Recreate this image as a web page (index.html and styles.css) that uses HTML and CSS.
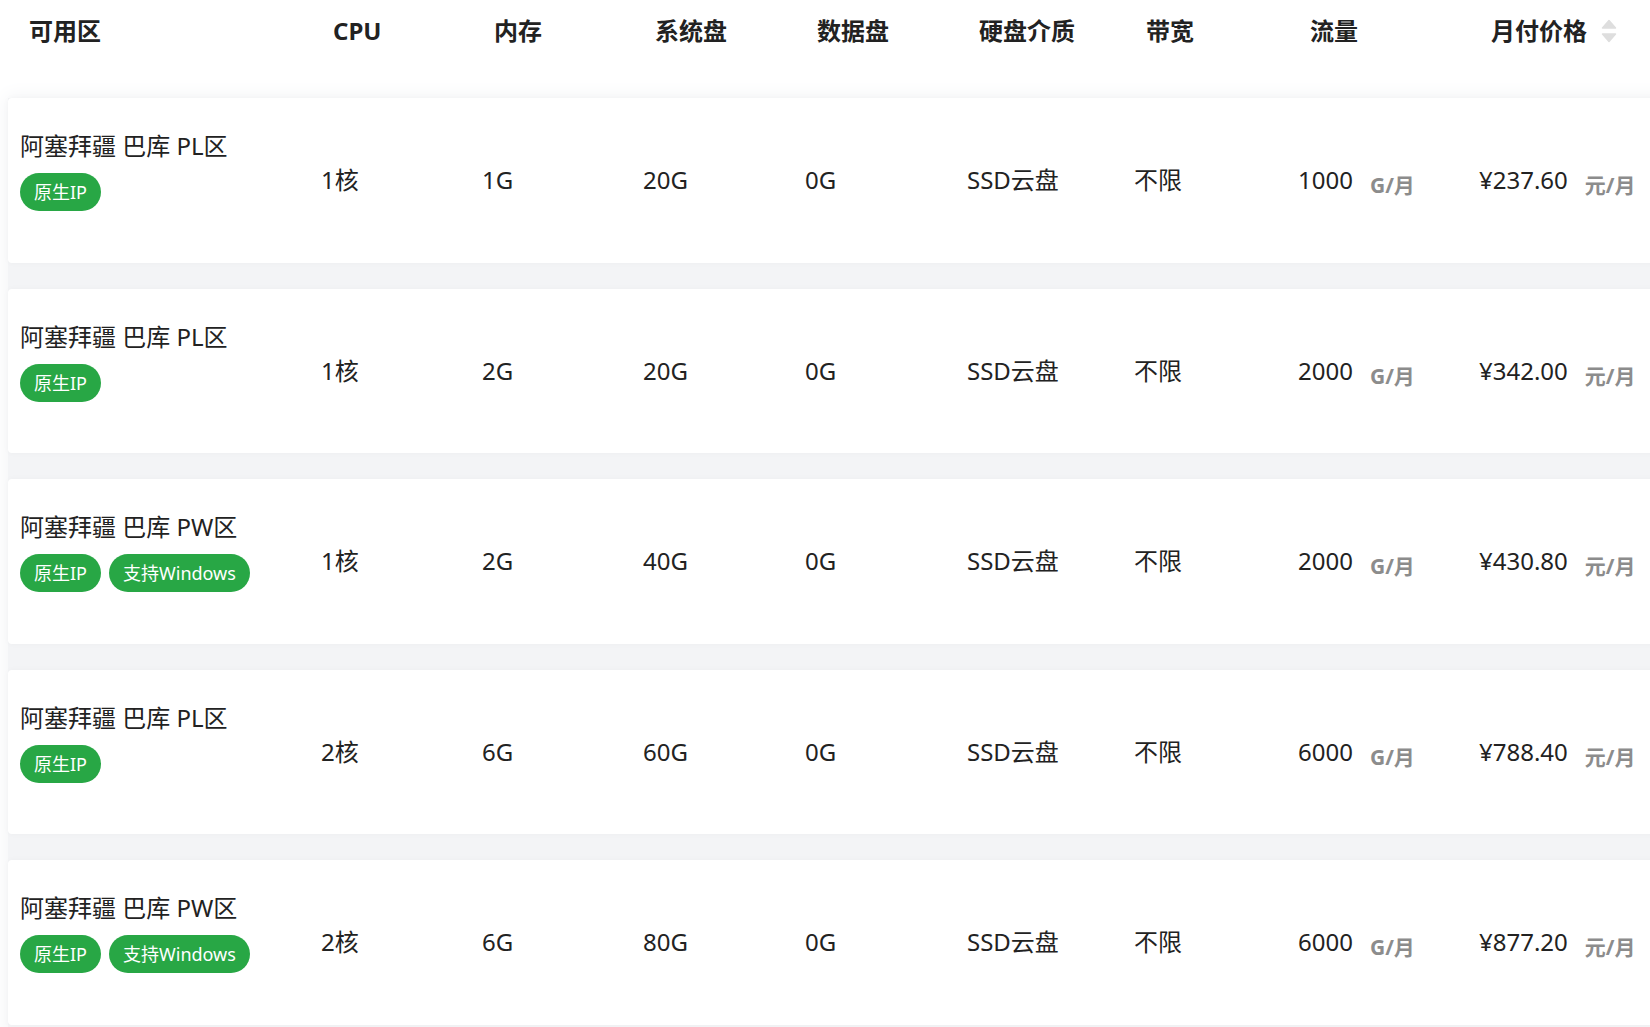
FILE: index.html
```html
<!DOCTYPE html>
<html lang="zh-CN">
<head>
<meta charset="utf-8">
<title>价格表</title>
<link rel="stylesheet" href="styles.css">
</head>
<body>
<div class="page">
  <div class="table">
    <div class="thead">
      <div class="th first">可用区</div>
      <div class="th">CPU</div>
      <div class="th">内存</div>
      <div class="th">系统盘</div>
      <div class="th">数据盘</div>
      <div class="th">硬盘介质</div>
      <div class="th">带宽</div>
      <div class="th">流量</div>
      <div class="th sort">月付价格<svg class="sort-icon" width="16" height="24" viewBox="0 0 16 24"><polygon points="1.5,9 8,1.5 14.5,9" /><polygon points="1.5,15 8,22.5 14.5,15" /></svg></div>
    </div>
    <div class="tbody">
      <div class="row">
        <div class="cell zone">
          <div class="zone-name">阿塞拜疆 巴库 PL区</div>
          <div class="tags"><span class="tag">原生IP</span></div>
        </div>
        <div class="cell">1核</div>
        <div class="cell">1G</div>
        <div class="cell">20G</div>
        <div class="cell">0G</div>
        <div class="cell">SSD云盘</div>
        <div class="cell">不限</div>
        <div class="cell">1000<span class="unit">G/月</span></div>
        <div class="cell">¥237.60<span class="unit">元/月</span></div>
      </div>
      <div class="row">
        <div class="cell zone">
          <div class="zone-name">阿塞拜疆 巴库 PL区</div>
          <div class="tags"><span class="tag">原生IP</span></div>
        </div>
        <div class="cell">1核</div>
        <div class="cell">2G</div>
        <div class="cell">20G</div>
        <div class="cell">0G</div>
        <div class="cell">SSD云盘</div>
        <div class="cell">不限</div>
        <div class="cell">2000<span class="unit">G/月</span></div>
        <div class="cell">¥342.00<span class="unit">元/月</span></div>
      </div>
      <div class="row">
        <div class="cell zone">
          <div class="zone-name">阿塞拜疆 巴库 PW区</div>
          <div class="tags"><span class="tag">原生IP</span><span class="tag">支持Windows</span></div>
        </div>
        <div class="cell">1核</div>
        <div class="cell">2G</div>
        <div class="cell">40G</div>
        <div class="cell">0G</div>
        <div class="cell">SSD云盘</div>
        <div class="cell">不限</div>
        <div class="cell">2000<span class="unit">G/月</span></div>
        <div class="cell">¥430.80<span class="unit">元/月</span></div>
      </div>
      <div class="row">
        <div class="cell zone">
          <div class="zone-name">阿塞拜疆 巴库 PL区</div>
          <div class="tags"><span class="tag">原生IP</span></div>
        </div>
        <div class="cell">2核</div>
        <div class="cell">6G</div>
        <div class="cell">60G</div>
        <div class="cell">0G</div>
        <div class="cell">SSD云盘</div>
        <div class="cell">不限</div>
        <div class="cell">6000<span class="unit">G/月</span></div>
        <div class="cell">¥788.40<span class="unit">元/月</span></div>
      </div>
      <div class="row">
        <div class="cell zone">
          <div class="zone-name">阿塞拜疆 巴库 PW区</div>
          <div class="tags"><span class="tag">原生IP</span><span class="tag">支持Windows</span></div>
        </div>
        <div class="cell">2核</div>
        <div class="cell">6G</div>
        <div class="cell">80G</div>
        <div class="cell">0G</div>
        <div class="cell">SSD云盘</div>
        <div class="cell">不限</div>
        <div class="cell">6000<span class="unit">G/月</span></div>
        <div class="cell">¥877.20<span class="unit">元/月</span></div>
      </div>
    </div>
  </div>
</div>
</body>
</html>
```

FILE: styles.css
```css
html, body {
  margin: 0;
  padding: 0;
  background: #ffffff;
}

body {
  font-family: "Noto Sans", "Noto Sans CJK SC", sans-serif;
  color: #222222;
  overflow: hidden;
}

.page {
  width: 1650px;
  height: 1027px;
  overflow: hidden;
  padding-left: 8px;
  box-sizing: border-box;
}

.table {
  width: 1720px;
}

.thead,
.row {
  display: grid;
  grid-template-columns: 301px 161px 161px 162px 162px 167px 164px 181px 1fr;
  padding-left: 12px;
}

.thead {
  height: 61px;
  align-items: center;
}

.th {
  font-size: 24px;
  font-weight: 700;
  color: #222222;
  padding-left: 12px;
  display: flex;
  align-items: center;
  line-height: 34px;
}

.th.first {
  padding-left: 9px;
}

.sort-icon {
  margin-left: 14px;
  fill: #dedede;
  stroke: #dedede;
  stroke-width: 1.5;
  stroke-linejoin: round;
}

.tbody {
  margin-top: 37px;
  display: flex;
  flex-direction: column;
  gap: 26px;
  background: #f3f4f6;
  box-shadow: 0 0 18px 2px #f3f4f6;
  padding-bottom: 26px;
}

.row {
  height: 164.5px;
  background: #ffffff;
  border-radius: 4px;
  box-shadow: 0 0 6px rgba(30, 40, 70, 0.03);
  align-items: center;
  font-size: 24px;
  line-height: 34px;
}

.cell {
  white-space: nowrap;
}

.cell.zone {
  align-self: start;
  padding-top: 31px;
}

.zone-name {
  line-height: 34px;
}

.tags {
  display: flex;
  gap: 8px;
  margin-top: 10px;
}

.tag {
  display: inline-flex;
  align-items: center;
  height: 38px;
  padding: 0 14px;
  border-radius: 19px;
  background: #28a745;
  color: #ffffff;
  font-size: 18px;
}

.unit {
  font-size: 21px;
  font-weight: 700;
  line-height: 1;
  color: #8c8c8c;
  margin-left: 17px;
  vertical-align: -4px;
}
```
